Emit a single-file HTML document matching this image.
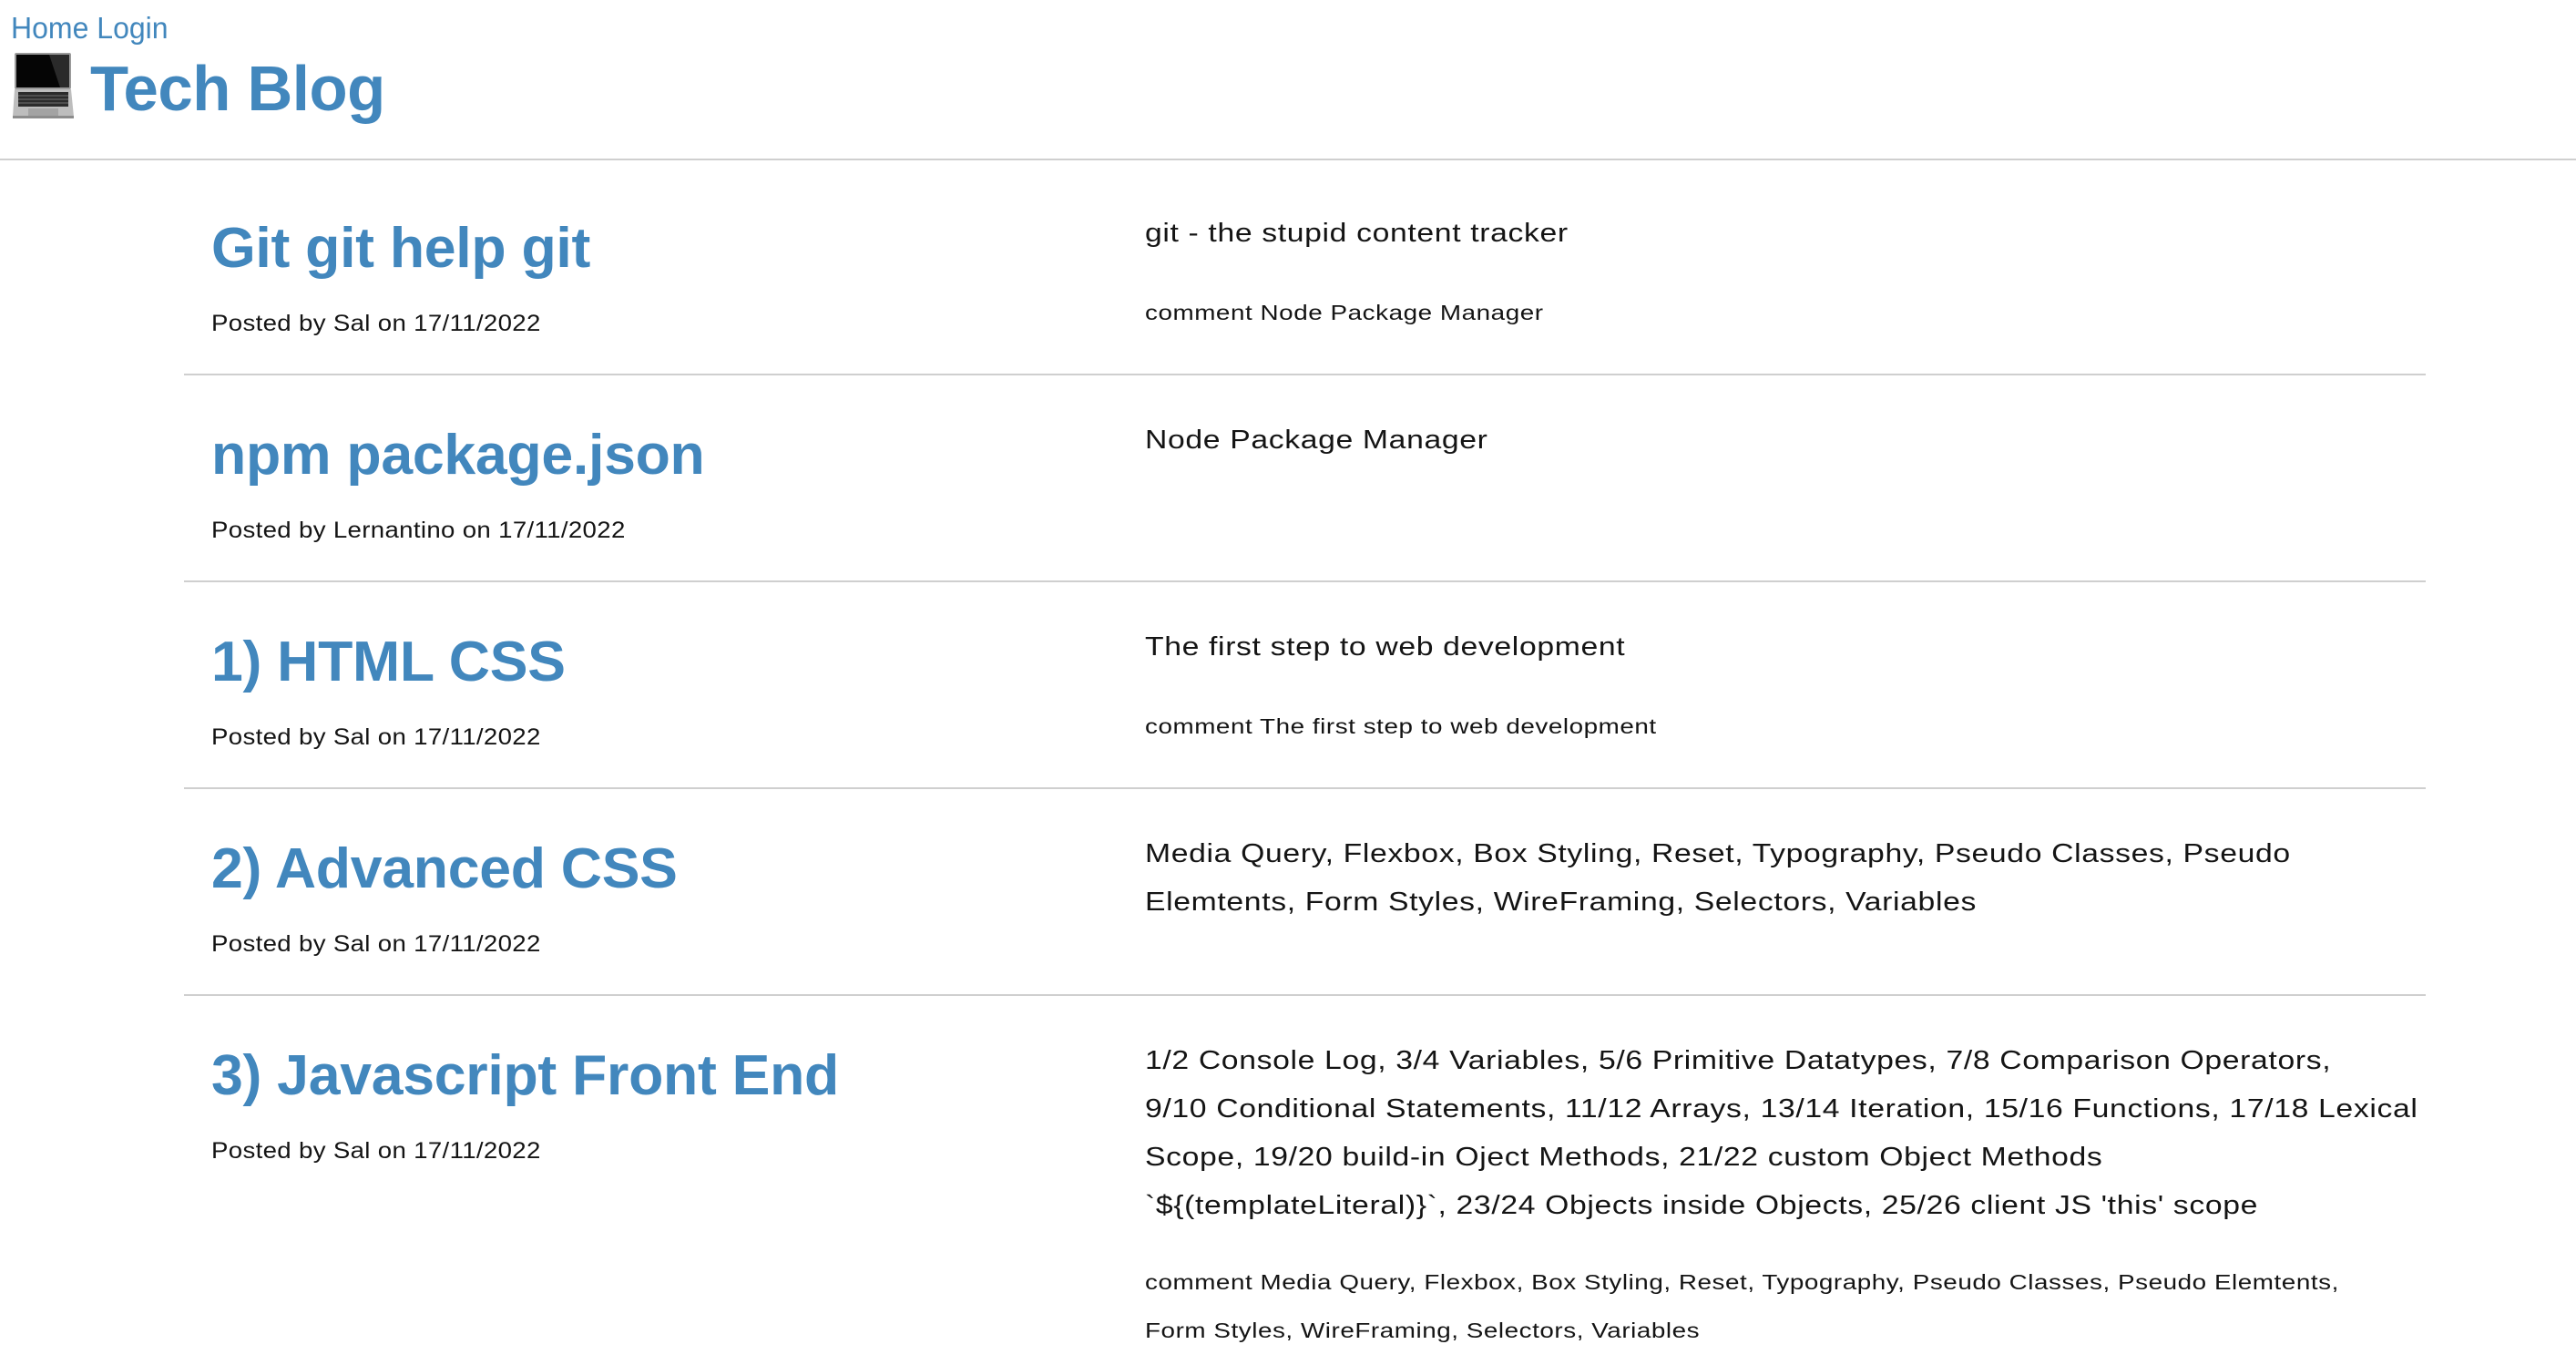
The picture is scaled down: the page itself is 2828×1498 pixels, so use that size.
<!DOCTYPE html>
<html><head><meta charset="utf-8"><style>
*{margin:0;padding:0;box-sizing:border-box}
body{width:2828px;height:1498px;overflow:hidden;background:#fff;font-family:"Liberation Sans",sans-serif;color:#141414;position:relative}
.a{position:absolute;white-space:nowrap;transform-origin:0 0}
.nav{left:12px;top:14px;font-size:33px;line-height:33px;color:#4287bd;transform:scaleX(0.97)}
.h1{left:99px;top:62px;font-size:70px;line-height:70px;font-weight:bold;color:#4287bd;letter-spacing:-0.5px;transform:scaleX(0.985)}
.hr{position:absolute;left:0;width:2828px;top:174px;height:2px;background:#cfcfcf}
.dv{position:absolute;left:202px;width:2461px;height:2px;background:#cfcfcf}
.t{left:232px;font-size:62px;line-height:62px;font-weight:bold;color:#4287bd;letter-spacing:-0.3px;transform:scaleX(1.01)}
.p{left:232px;font-size:25px;line-height:25px;letter-spacing:0.3px;transform:scaleX(1.105)}
.d{left:1257px;font-size:29px;line-height:53px;letter-spacing:0.55px;transform:scaleX(1.163)}
.c{left:1257px;font-size:23px;line-height:53px;letter-spacing:0.45px;transform:scaleX(1.21)}
</style></head><body>
<div class="a nav">Home Login</div>
<svg class="a" style="left:14px;top:58px" width="68" height="72" viewBox="0 0 68 72">
<rect x="2" y="0" width="62" height="40" rx="2" fill="#9a9a9a"/>
<rect x="4" y="2" width="58" height="36" fill="#050505"/>
<polygon points="40,2 62,2 62,38 52,38" fill="#2a2a2a"/>
<polygon points="2,40 64,40 67,70 0,70" fill="#bdbdbd"/>
<rect x="6" y="43" width="55" height="16" fill="#2b2b2b"/>
<g stroke="#888" stroke-width="0.8"><line x1="6" y1="47" x2="61" y2="47"/><line x1="6" y1="51" x2="61" y2="51"/><line x1="6" y1="55" x2="61" y2="55"/></g>
<rect x="17" y="61" width="33" height="8" fill="#a3a3a3"/>
<rect x="0" y="69" width="67" height="3" fill="#8c8c8c"/>
</svg>
<div class="a h1">Tech Blog</div>
<div class="hr"></div>

<div class="a t" style="top:242px">Git git help git</div>
<div class="a p" style="top:343px">Posted by Sal on 17/11/2022</div>
<div class="a d" style="top:230px">git - the stupid content tracker</div>
<div class="a c" style="top:317px">comment Node Package Manager</div>
<div class="dv" style="top:410px"></div>

<div class="a t" style="top:469px">npm package.json</div>
<div class="a p" style="top:570px">Posted by Lernantino on 17/11/2022</div>
<div class="a d" style="top:457px">Node Package Manager</div>
<div class="dv" style="top:637px"></div>

<div class="a t" style="top:696px">1) HTML CSS</div>
<div class="a p" style="top:797px">Posted by Sal on 17/11/2022</div>
<div class="a d" style="top:684px">The first step to web development</div>
<div class="a c" style="top:771px">comment The first step to web development</div>
<div class="dv" style="top:864px"></div>

<div class="a t" style="top:923px">2) Advanced CSS</div>
<div class="a p" style="top:1024px">Posted by Sal on 17/11/2022</div>
<div class="a d" style="top:911px">Media Query, Flexbox, Box Styling, Reset, Typography, Pseudo Classes, Pseudo<br>Elemtents, Form Styles, WireFraming, Selectors, Variables</div>
<div class="dv" style="top:1091px"></div>

<div class="a t" style="top:1150px">3) Javascript Front End</div>
<div class="a p" style="top:1251px">Posted by Sal on 17/11/2022</div>
<div class="a d" style="top:1138px">1/2 Console Log, 3/4 Variables, 5/6 Primitive Datatypes, 7/8 Comparison Operators,<br>9/10 Conditional Statements, 11/12 Arrays, 13/14 Iteration, 15/16 Functions, 17/18 Lexical<br>Scope, 19/20 build-in Oject Methods, 21/22 custom Object Methods<br>`${(templateLiteral)}`, 23/24 Objects inside Objects, 25/26 client JS 'this' scope</div>
<div class="a c" style="top:1381px">comment Media Query, Flexbox, Box Styling, Reset, Typography, Pseudo Classes, Pseudo Elemtents,<br>Form Styles, WireFraming, Selectors, Variables</div>
</body></html>
